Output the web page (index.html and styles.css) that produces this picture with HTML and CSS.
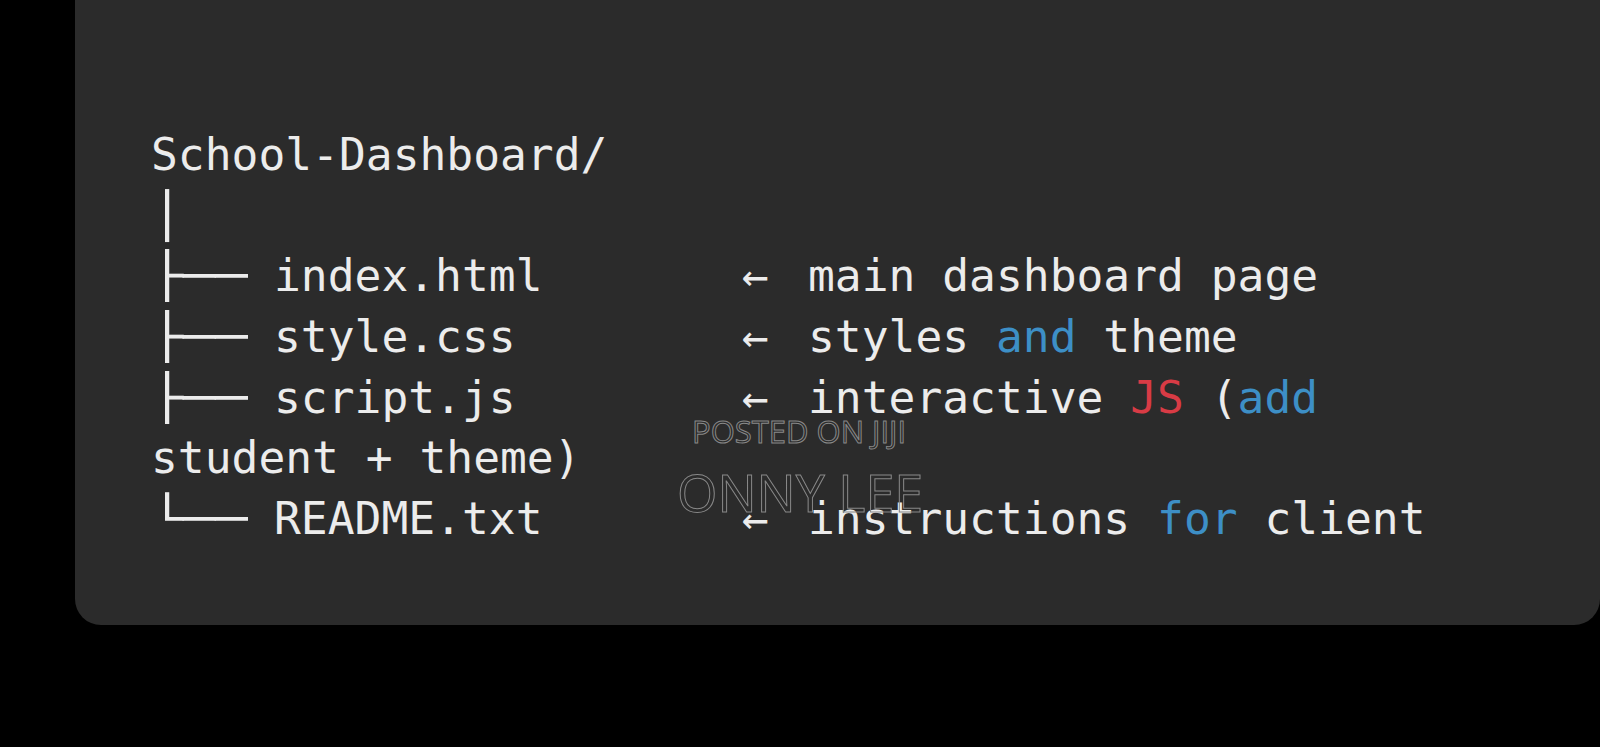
FILE: index.html
```html
<!DOCTYPE html>
<html lang="en">
<head>
<meta charset="utf-8">
<title>School-Dashboard tree</title>
<link rel="stylesheet" href="styles.css">
</head>
<body>
<div class="card">
  <div class="tree">
    <div class="line">School-Dashboard/</div>
    <div class="line"><span class="br">│</span></div>
    <div class="line"><span class="br">├──</span><span class="name">index.html</span><span class="arrow">←</span><span class="desc">main dashboard page</span></div>
    <div class="line"><span class="br">├──</span><span class="name">style.css</span><span class="arrow">←</span><span class="desc">styles <span class="kw">and</span> theme</span></div>
    <div class="line"><span class="br">├──</span><span class="name">script.js</span><span class="arrow">←</span><span class="desc">interactive <span class="js">JS</span> (<span class="kw">add</span></span></div>
    <div class="line">student + theme)</div>
    <div class="line"><span class="br">└──</span><span class="name">README.txt</span><span class="arrow">←</span><span class="desc">instructions <span class="kw">for</span> client</span></div>
  </div>
  <div class="wm wm-small">POSTED ON JIJI</div>
  <div class="wm wm-big">ONNY LEE</div>
</div>
</body>
</html>
```
FILE: styles.css
```css
html, body {
  margin: 0;
  padding: 0;
  background: #000;
  height: 747px;
  overflow: hidden;
}

.card {
  position: relative;
  margin-left: 75px;
  width: 1525px;
  height: 625px;
  box-sizing: border-box;
  background: #2b2b2b;
  border-radius: 0 0 26px 26px;
  padding: 125px 0 0 76px;
}

.tree {
  font-family: "DejaVu Sans Mono", "Liberation Mono", monospace;
  font-size: 44.6px;
  line-height: 60.7px;
  color: #ececec;
}

.line {
  height: 60.7px;
  white-space: pre;
}

.br {
  display: inline-block;
  width: 123px;
  transform: scaleX(1.2);
  transform-origin: 0 50%;
}

.name {
  display: inline-block;
  width: 468px;
}

.arrow {
  display: inline-block;
  width: 66px;
}

.kw {
  color: #3d8fc6;
}

.js {
  color: #d83b45;
}

.wm {
  position: absolute;
  font-family: "Open Sans", "Liberation Sans", sans-serif;
  color: transparent;
  -webkit-text-stroke: 1px #888;
  white-space: nowrap;
  line-height: 1;
}

.wm-small {
  left: 617px;
  top: 416px;
  font-size: 31px;
}

.wm-big {
  left: 602px;
  top: 466px;
  font-size: 52px;
}
```
